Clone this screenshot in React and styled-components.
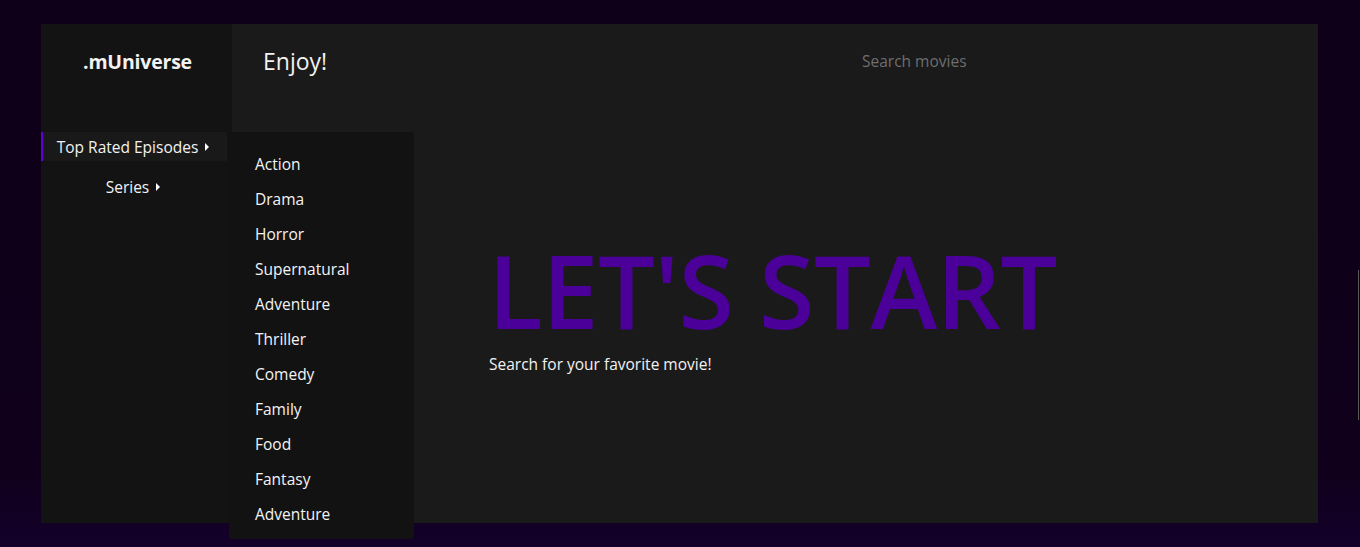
import React from 'react';
import styled, { createGlobalStyle } from 'styled-components';

const GlobalStyle = createGlobalStyle`
    html, body {
        margin: 0;
        padding: 0;
        height: 100%;
        background: #0f0019;
        font-family: "Open Sans", "Noto Sans", sans-serif;
        color: #f2f2f2;
        overflow: hidden;
    }
    #root {
        height: 100%;
    }
`;

const Page = styled.div`
    position: relative;
    height: 547px;
    box-sizing: border-box;
    padding: 24px 42px 24px 41px;
    background: linear-gradient(180deg, #0f0019 0%, #10001b 85%, #14002a 100%);
`;

const Shell = styled.div`
    display: flex;
    height: 499px;
`;

const Sidebar = styled.aside`
    width: 191px;
    flex-shrink: 0;
    background: #131313;
    display: flex;
    flex-direction: column;
`;

const Logo = styled.div`
    height: 108px;
    display: flex;
    align-items: center;
    justify-content: center;
    font-size: 19.5px;
    font-weight: 700;
    letter-spacing: -0.2px;
    padding: 0 0 34px 2px;
    box-sizing: border-box;
`;

const Nav = styled.ul`
    list-style: none;
    margin: 0;
    padding: 0;
    display: flex;
    flex-direction: column;
    gap: 11px;
`;

const NavItem = styled.li`
    position: relative;
    width: 186px;
    height: 29px;
    box-sizing: border-box;
    display: flex;
    align-items: center;
    justify-content: center;
    gap: 7px;
    padding-right: 4px;
    font-size: 15.5px;
    border-left: 2px solid ${(p) => (p.$active ? '#5b00d6' : 'transparent')};
    background: ${(p) => (p.$active ? '#191919' : 'transparent')};
`;

const Caret = styled.span`
    width: 0;
    height: 0;
    border-top: 4px solid transparent;
    border-bottom: 4px solid transparent;
    border-left: 4px solid #ffffff;
    margin-top: 1px;
`;

const Dropdown = styled.ul`
    position: absolute;
    top: 0;
    left: 186px;
    width: 185px;
    margin: 0;
    list-style: none;
    padding: 15px 0 7px 26px;
    box-sizing: border-box;
    background: #121212;
    border-radius: 3px;
    z-index: 5;
`;

const DropItem = styled.li`
    height: 35px;
    line-height: 35px;
    font-size: 15.5px;
    color: #f4f4f4;
`;

const Main = styled.main`
    flex: 1;
    background: #1a1a1a;
    display: flex;
    flex-direction: column;
`;

const Header = styled.header`
    height: 108px;
    display: flex;
    align-items: center;
    padding: 0 0 34px 31px;
    box-sizing: border-box;
`;

const Greeting = styled.h2`
    margin: 0;
    font-size: 23px;
    font-weight: 400;
    width: 599px;
`;

const Search = styled.input`
    background: transparent;
    border: none;
    outline: none;
    font-family: inherit;
    font-size: 15.5px;
    color: #f2f2f2;
    width: 300px;
    padding: 0;
    &::placeholder {
        color: #6e6e6e;
    }
`;

const Hero = styled.section`
    padding: 98px 0 0 256px;
`;

const Title = styled.h1`
    margin: 0;
    font-size: 101px;
    font-weight: 600;
    line-height: 1.2;
    color: #4b0099;
    letter-spacing: -0.6px;
`;

const Subtitle = styled.p`
    margin: 2px 0 0 1px;
    font-size: 15.5px;
`;

const ScrollThumb = styled.div`
    position: absolute;
    right: 1px;
    top: 270px;
    width: 1px;
    height: 150px;
    background: #5a5a5a;
`;

const genres = ['Action', 'Drama', 'Horror', 'Supernatural', 'Adventure', 'Thriller', 'Comedy', 'Family', 'Food', 'Fantasy', 'Adventure'];

export default function App() {
    return (
        <>
            <GlobalStyle />
            <Page>
                <Shell>
                    <Sidebar>
                        <Logo>.mUniverse</Logo>
                        <Nav>
                            <NavItem $active>
                                Top Rated Episodes <Caret />
                                <Dropdown>
                                    {genres.map((g, i) => <DropItem key={i}>{g}</DropItem>)}
                                </Dropdown>
                            </NavItem>
                            <NavItem>
                                Series <Caret />
                            </NavItem>
                        </Nav>
                    </Sidebar>
                    <Main>
                        <Header>
                            <Greeting>Enjoy!</Greeting>
                            <Search placeholder="Search movies" />
                        </Header>
                        <Hero>
                            <Title>LET'S START</Title>
                            <Subtitle>Search for your favorite movie!</Subtitle>
                        </Hero>
                    </Main>
                </Shell>
                <ScrollThumb />
            </Page>
        </>
    );
}
